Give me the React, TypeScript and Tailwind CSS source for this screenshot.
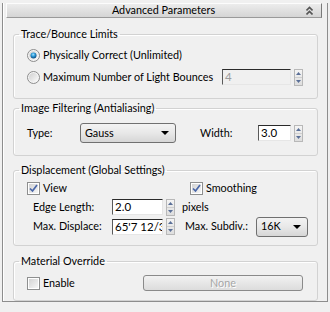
function Spinner() {
  return (
    <div className="flex h-[17px] w-[9px] flex-col border border-[#b8b8b8] bg-gradient-to-b from-[#f4f4f4] to-[#dedede]">
      <div className="flex flex-1 items-center justify-center border-b border-[#cfcfcf]">
        <svg width="5" height="3" viewBox="0 0 5 3">
          <path d="M2.5 0L5 3H0z" fill="#5a6f97" />
        </svg>
      </div>
      <div className="flex flex-1 items-center justify-center">
        <svg width="5" height="3" viewBox="0 0 5 3">
          <path d="M0 0h5L2.5 3z" fill="#5a6f97" />
        </svg>
      </div>
    </div>
  );
}

function NumField({ value, width, disabled }: { value: string; width: string; disabled?: boolean }) {
  return (
    <div className="flex items-center gap-[3px]">
      <div
        className={`${width} flex h-[16px] items-center overflow-hidden whitespace-nowrap border-t border-l border-t-[#2a2a2a] border-l-[#5a5a5a] border-r border-b border-r-[#e6e6e6] border-b-[#e6e6e6] pl-[2px] text-[11.5px] leading-none ${
          disabled ? "bg-[#f0f0f0] text-[#9c9c9c]" : "bg-white text-black"
        }`}
      >
        {value}
      </div>
      <Spinner />
    </div>
  );
}

function Dropdown({ value, width }: { value: string; width: string }) {
  return (
    <div
      className={`${width} flex h-[20px] items-center justify-between rounded-[3px] border border-[#707070] bg-gradient-to-b from-[#f3f3f3] via-[#e8e8e8] to-[#d6d6d6] pl-[4px] pr-[6px]`}
    >
      <span>{value}</span>
      <svg width="8" height="4" viewBox="0 0 8 4">
        <path d="M0 0h8L4 4z" fill="#000" />
      </svg>
    </div>
  );
}

function Radio({ checked }: { checked?: boolean }) {
  return (
    <svg width="13" height="13" viewBox="0 0 13 13" className="shrink-0">
      <defs>
        <linearGradient id={checked ? "rbOn" : "rbOff"} x1="0" y1="0" x2="1" y2="1">
          <stop offset="0" stopColor="#d0d0d0" />
          <stop offset="1" stopColor="#fbfbfb" />
        </linearGradient>
        <radialGradient id="rdot" cx="45%" cy="35%" r="60%">
          <stop offset="0" stopColor="#a8e2ff" />
          <stop offset="0.5" stopColor="#2d9bd8" />
          <stop offset="1" stopColor="#0f4f86" />
        </radialGradient>
      </defs>
      <circle cx="6.5" cy="6.5" r="6" fill="#f5f5f5" stroke="#8c8c8c" />
      <circle cx="6.5" cy="6.5" r="4.5" fill={checked ? "url(#rbOn)" : "url(#rbOff)"} />
      {checked && <circle cx="6.5" cy="6.5" r="3" fill="url(#rdot)" />}
    </svg>
  );
}

function Checkbox({ checked }: { checked?: boolean }) {
  return (
    <div className="flex h-[13px] w-[13px] shrink-0 items-center justify-center border border-[#8e8f8f] bg-white">
      <div className="relative h-[9px] w-[9px] bg-gradient-to-br from-[#d3d3d3] to-[#f6f6f6]">
        {checked && (
          <svg width="9" height="9" viewBox="0 0 9 9" className="absolute left-0 top-0">
            <path d="M1 4.5L3.5 7L8 1" fill="none" stroke="#4a67a8" strokeWidth="1.7" />
          </svg>
        )}
      </div>
    </div>
  );
}

function Group({ title, height, children }: { title: string; height: string; children: React.ReactNode }) {
  return (
    <fieldset className={`${height} ml-[10px] w-[305px] rounded-[3px] border border-[#d2d2d2] shadow-[inset_1px_1px_0_#fff]`}>
      <legend className="ml-[5px] px-[2px] leading-[14px]">{title}</legend>
      {children}
    </fieldset>
  );
}

export default function App() {
  return (
    <div className="h-[312px] w-[330px] overflow-hidden whitespace-nowrap bg-[#f0f0f0] font-['Lato',sans-serif] text-[10.8px] text-black">
      <div className="mx-[2px] mt-[11px] h-[299px] border-x border-b border-[#8d8d8d] shadow-[inset_1px_0_0_#fff]">
        <div className="-mt-[8px] ml-[3px] flex h-[15px] w-[316px] items-center border border-t-[#fcfcfc] border-l-[#fcfcfc] border-r-[#7a7a7a] border-b-[#9a9a9a] bg-gradient-to-b from-[#ececec] to-[#d5d5d5]">
          <span className="flex-1 pl-[14px] text-center leading-none">Advanced Parameters</span>
          <svg width="7" height="9" viewBox="0 0 7 9" className="mr-[8px]">
            <path d="M0.5 4.5L3.5 1.5L6.5 4.5M0.5 8.5L3.5 5.5L6.5 8.5" fill="none" stroke="#555" strokeWidth="1.6" />
          </svg>
        </div>

        <div className="mt-[9px] flex flex-col">
          <Group title="Trace/Bounce Limits" height="h-[72px]">
            <div className="flex flex-col gap-[6px] pl-[13px] pt-[6px]">
              <div className="flex h-[16px] items-center gap-[3px]">
                <Radio checked />
                <span>Physically Correct (Unlimited)</span>
              </div>
              <div className="flex h-[16px] items-center">
                <div className="flex w-[195px] items-center gap-[3px]">
                  <Radio />
                  <span>Maximum Number of Light Bounces</span>
                </div>
                <NumField value="4" width="w-[69px]" disabled />
              </div>
            </div>
          </Group>

          <div className="mt-[2px]">
            <Group title="Image Filtering (Antialiasing)" height="h-[55px]">
              <div className="mt-[8px] flex h-[20px] items-center pl-[13px]">
                <span className="w-[53px]">Type:</span>
                <Dropdown value="Gauss" width="w-[96px]" />
                <span className="ml-[24px] w-[58px]">Width:</span>
                <NumField value="3.0" width="w-[33px]" />
              </div>
            </Group>
          </div>

          <div className="mt-[7px]">
            <Group title="Displacement (Global Settings)" height="h-[83px]">
              <div className="flex flex-col pl-[13px] pt-[5px]">
                <div className="flex h-[13px] items-center">
                  <div className="flex w-[163px] items-center gap-[3px]">
                    <Checkbox checked />
                    <span>View</span>
                  </div>
                  <div className="flex items-center gap-[3px]">
                    <Checkbox checked />
                    <span>Smoothing</span>
                  </div>
                </div>
                <div className="mt-[4px] flex h-[16px] items-center pl-[6px]">
                  <span className="w-[79px]">Edge Length:</span>
                  <NumField value="2.0" width="w-[51px]" />
                  <span className="ml-[7px]">pixels</span>
                </div>
                <div className="mt-[1px] flex h-[21px] items-center pl-[6px]">
                  <span className="w-[79px]">Max. Displace:</span>
                  <NumField value="65'7 12/32" width="w-[51px]" />
                  <span className="ml-[10px] w-[71px]">Max. Subdiv.:</span>
                  <Dropdown value="16K" width="w-[52px]" />
                </div>
              </div>
            </Group>
          </div>

          <div className="mt-[8px]">
            <Group title="Material Override" height="h-[47px]">
              <div className="mt-[7px] flex h-[16px] items-center pl-[13px]">
                <div className="flex w-[116px] items-center gap-[3px]">
                  <Checkbox />
                  <span>Enable</span>
                </div>
                <div className="flex h-[16px] w-[160px] items-center justify-center rounded-[3px] border border-[#8a8a8a] bg-gradient-to-b from-[#f2f2f2] to-[#dcdcdc] text-[#a6a6a6] [text-shadow:1px_1px_0_#fff]">
                  None
                </div>
              </div>
            </Group>
          </div>
        </div>
      </div>
    </div>
  );
}
